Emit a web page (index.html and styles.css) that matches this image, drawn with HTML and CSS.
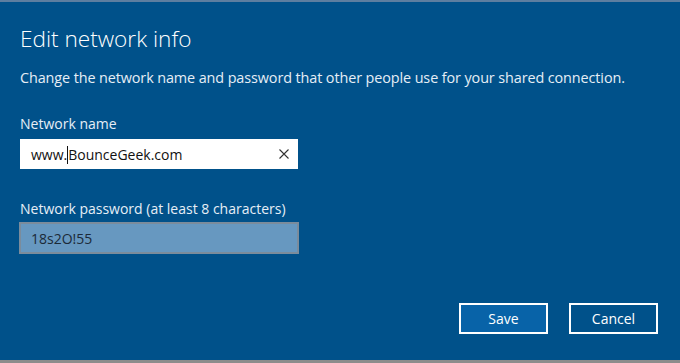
FILE: index.html
```html
<!DOCTYPE html>
<html lang="en">
<head>
  <meta charset="UTF-8" />
  <title>Edit network info</title>
  <link rel="stylesheet" href="styles.css">
</head>
<body>

<div class="dialog">
  <h1>Edit network info</h1>
  <p class="intro">Change the network name and password that other people use for your shared connection.</p>

  <label class="field-label" for="ssid">Network name</label>
  <div class="textbox">
    <span class="value">www.<span class="caret"></span>BounceGeek.com</span>
    <svg class="clear" width="12" height="12" viewBox="0 0 12 12">
      <path d="M1.5 1.5 L10.5 10.5 M10.5 1.5 L1.5 10.5" stroke="#333" stroke-width="1.1" fill="none"/>
    </svg>
  </div>

  <label class="field-label pw-label">Network password (at least 8 characters)</label>
  <div class="textbox disabled">
    <span class="value">18s2O!55</span>
  </div>

  <div class="actions">
    <button class="button primary">Save</button>
    <button class="button">Cancel</button>
  </div>
</div>
<div class="taskbar"></div>

</body>
</html>
```

FILE: styles.css
```css
html, body {
  margin: 0;
  padding: 0;
  height: 100%;
}

body {
  font-family: "Open Sans", "Noto Sans", sans-serif;
  background-color: #00518a;
  color: #fff;
  display: flex;
  flex-direction: column;
  overflow: hidden;
}

.dialog {
  flex: 1;
  border-top: 2px solid #5d7ea0;
  padding: 0 20px;
  display: flex;
  flex-direction: column;
  align-items: flex-start;
}

h1 {
  font-size: 22.6px;
  font-weight: 300;
  margin: 22px 0 0;
  line-height: 30px;
}

.intro {
  font-size: 14.4px;
  margin: 14px 0 0;
  line-height: 20px;
  color: #e6eef6;
  letter-spacing: -0.1px;
}

.field-label {
  font-size: 14px;
  line-height: 20px;
  color: #e6eef6;
  margin-top: 26px;
}

.pw-label {
  margin-top: 30px;
}

.textbox {
  box-sizing: border-box;
  width: 278px;
  height: 30px;
  margin-top: 5px;
  background: #fff;
  color: #111;
  display: flex;
  align-items: center;
  justify-content: space-between;
  padding: 0 8px 0 11px;
  font-size: 14px;
}

.textbox.disabled {
  width: 280px;
  height: 32px;
  margin-left: -1px;
  margin-top: 3px;
  background: #6798c0;
  border: 2px solid #7b8c9c;
  color: #1b2a38;
  padding-left: 10px;
}

.caret {
  display: inline-block;
  width: 1px;
  height: 18px;
  background: #111;
  vertical-align: -4px;
}

.actions {
  align-self: flex-end;
  display: flex;
  gap: 21px;
  margin-top: 49px;
  margin-right: 2px;
}

.button {
  box-sizing: border-box;
  width: 89px;
  height: 31px;
  background: transparent;
  border: 2px solid #fff;
  color: #fff;
  font-family: inherit;
  font-size: 14px;
  cursor: pointer;
}

.button.primary {
  background: #0863a8;
}

.taskbar {
  height: 3px;
  background: #8c8c8c;
}
```
